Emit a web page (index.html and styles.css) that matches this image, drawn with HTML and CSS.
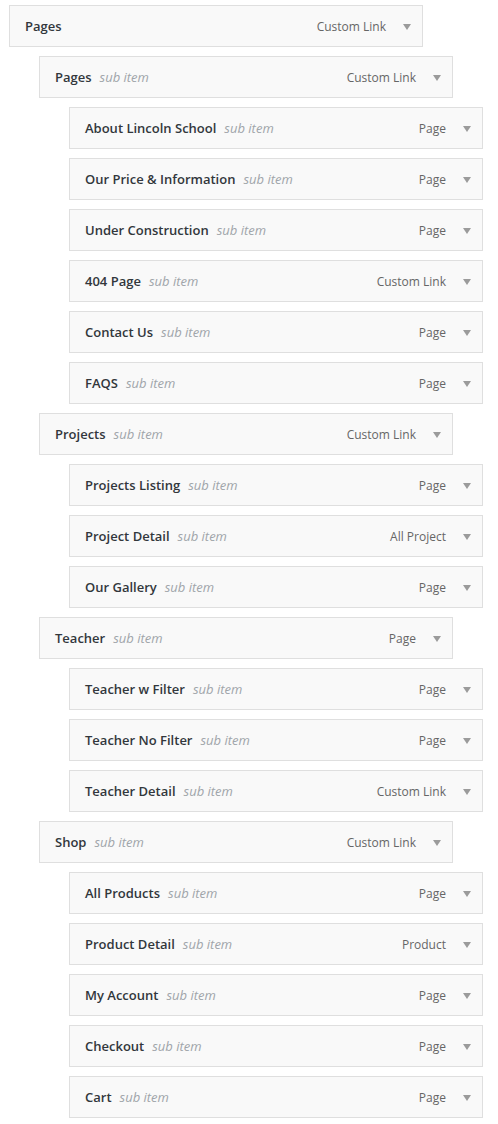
FILE: index.html
```html
<!DOCTYPE html>
<html>
<head>
<meta charset="utf-8">
<link rel="stylesheet" href="styles.css">
</head>
<body>
<ul class="menu">
  <li class="item d0"><span class="title">Pages</span><span class="type">Custom Link</span><span class="arrow"></span></li>
  <li class="item d1"><span class="title">Pages</span><span class="sub">sub item</span><span class="type">Custom Link</span><span class="arrow"></span></li>
  <li class="item d2"><span class="title">About Lincoln School</span><span class="sub">sub item</span><span class="type">Page</span><span class="arrow"></span></li>
  <li class="item d2"><span class="title">Our Price &amp; Information</span><span class="sub">sub item</span><span class="type">Page</span><span class="arrow"></span></li>
  <li class="item d2"><span class="title">Under Construction</span><span class="sub">sub item</span><span class="type">Page</span><span class="arrow"></span></li>
  <li class="item d2"><span class="title">404 Page</span><span class="sub">sub item</span><span class="type">Custom Link</span><span class="arrow"></span></li>
  <li class="item d2"><span class="title">Contact Us</span><span class="sub">sub item</span><span class="type">Page</span><span class="arrow"></span></li>
  <li class="item d2"><span class="title">FAQS</span><span class="sub">sub item</span><span class="type">Page</span><span class="arrow"></span></li>
  <li class="item d1"><span class="title">Projects</span><span class="sub">sub item</span><span class="type">Custom Link</span><span class="arrow"></span></li>
  <li class="item d2"><span class="title">Projects Listing</span><span class="sub">sub item</span><span class="type">Page</span><span class="arrow"></span></li>
  <li class="item d2"><span class="title">Project Detail</span><span class="sub">sub item</span><span class="type">All Project</span><span class="arrow"></span></li>
  <li class="item d2"><span class="title">Our Gallery</span><span class="sub">sub item</span><span class="type">Page</span><span class="arrow"></span></li>
  <li class="item d1"><span class="title">Teacher</span><span class="sub">sub item</span><span class="type">Page</span><span class="arrow"></span></li>
  <li class="item d2"><span class="title">Teacher w Filter</span><span class="sub">sub item</span><span class="type">Page</span><span class="arrow"></span></li>
  <li class="item d2"><span class="title">Teacher No Filter</span><span class="sub">sub item</span><span class="type">Page</span><span class="arrow"></span></li>
  <li class="item d2"><span class="title">Teacher Detail</span><span class="sub">sub item</span><span class="type">Custom Link</span><span class="arrow"></span></li>
  <li class="item d1"><span class="title">Shop</span><span class="sub">sub item</span><span class="type">Custom Link</span><span class="arrow"></span></li>
  <li class="item d2"><span class="title">All Products</span><span class="sub">sub item</span><span class="type">Page</span><span class="arrow"></span></li>
  <li class="item d2"><span class="title">Product Detail</span><span class="sub">sub item</span><span class="type">Product</span><span class="arrow"></span></li>
  <li class="item d2"><span class="title">My Account</span><span class="sub">sub item</span><span class="type">Page</span><span class="arrow"></span></li>
  <li class="item d2"><span class="title">Checkout</span><span class="sub">sub item</span><span class="type">Page</span><span class="arrow"></span></li>
  <li class="item d2"><span class="title">Cart</span><span class="sub">sub item</span><span class="type">Page</span><span class="arrow"></span></li>
</ul>
</body>
</html>
```
FILE: styles.css
```css
html, body {
  margin: 0;
  padding: 0;
  background: #ffffff;
}
body {
  font-family: "Open Sans", "Noto Sans", sans-serif;
}
.menu {
  list-style: none;
  margin: 0;
  padding: 5px 0 0 9px;
  display: flex;
  flex-direction: column;
  gap: 9px;
}
.item {
  box-sizing: border-box;
  width: 414px;
  height: 42px;
  border: 1px solid #dfdfdf;
  background: #f9f9f9;
  display: flex;
  align-items: center;
  padding: 0 11px 0 15px;
}
.d1 { margin-left: 30px; }
.d2 { margin-left: 60px; }
.title {
  font-size: 13px;
  font-weight: 600;
  color: #32373c;
}
.sub {
  font-size: 13px;
  font-style: italic;
  color: #a0a5aa;
  margin-left: 8px;
}
.type {
  margin-left: auto;
  font-size: 12px;
  color: #666666;
  margin-right: 17px;
}
.arrow {
  width: 0;
  height: 0;
  border-left: 4px solid transparent;
  border-right: 4px solid transparent;
  border-top: 6px solid #9b9b9b;
  margin-top: 1px;
}
```
